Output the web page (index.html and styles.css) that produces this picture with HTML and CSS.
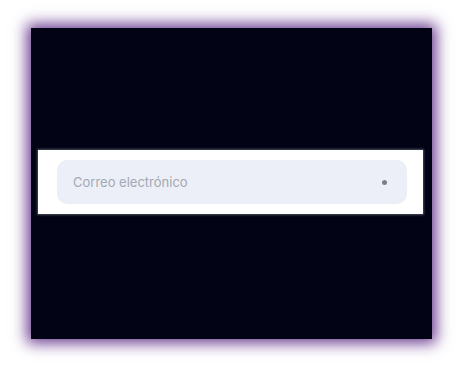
FILE: index.html
```html
<!DOCTYPE html>
<html lang="es">
<head>
<meta charset="utf-8">
<link rel="stylesheet" href="styles.css">
</head>
<body>
<div class="panel">
  <div class="strip">
    <div class="field">
      <span class="placeholder">Correo electrónico</span>
      <span class="dot"></span>
    </div>
  </div>
</div>
</body>
</html>
```

FILE: styles.css
```css
html, body {
  margin: 0;
  padding: 0;
  background: #ffffff;
}
body {
  width: 463px;
  height: 367px;
  padding-top: 28px;
  padding-left: 31px;
  box-sizing: border-box;
  font-family: Inter, "Noto Sans", sans-serif;
}
.panel {
  width: 401px;
  height: 311px;
  background: #020314;
  box-shadow: 0 0 14px 4px rgba(95, 45, 135, 0.95);
  padding-top: 122px;
  padding-left: 7px;
  box-sizing: border-box;
}
.strip {
  width: 385px;
  height: 64px;
  background: #ffffff;
  box-shadow: 0 0 2px 1px rgba(120, 130, 140, 0.6);
  padding: 10px 16px 10px 19px;
  box-sizing: border-box;
}
.field {
  height: 44px;
  background: #eceff7;
  border-radius: 10px;
  display: flex;
  align-items: center;
  justify-content: space-between;
  padding: 0 20px 0 16px;
}
.placeholder {
  font-size: 13px;
  color: #a3a8b3;
  letter-spacing: 0;
}
.dot {
  width: 5px;
  height: 5px;
  border-radius: 50%;
  background: #7c7f88;
}
```
